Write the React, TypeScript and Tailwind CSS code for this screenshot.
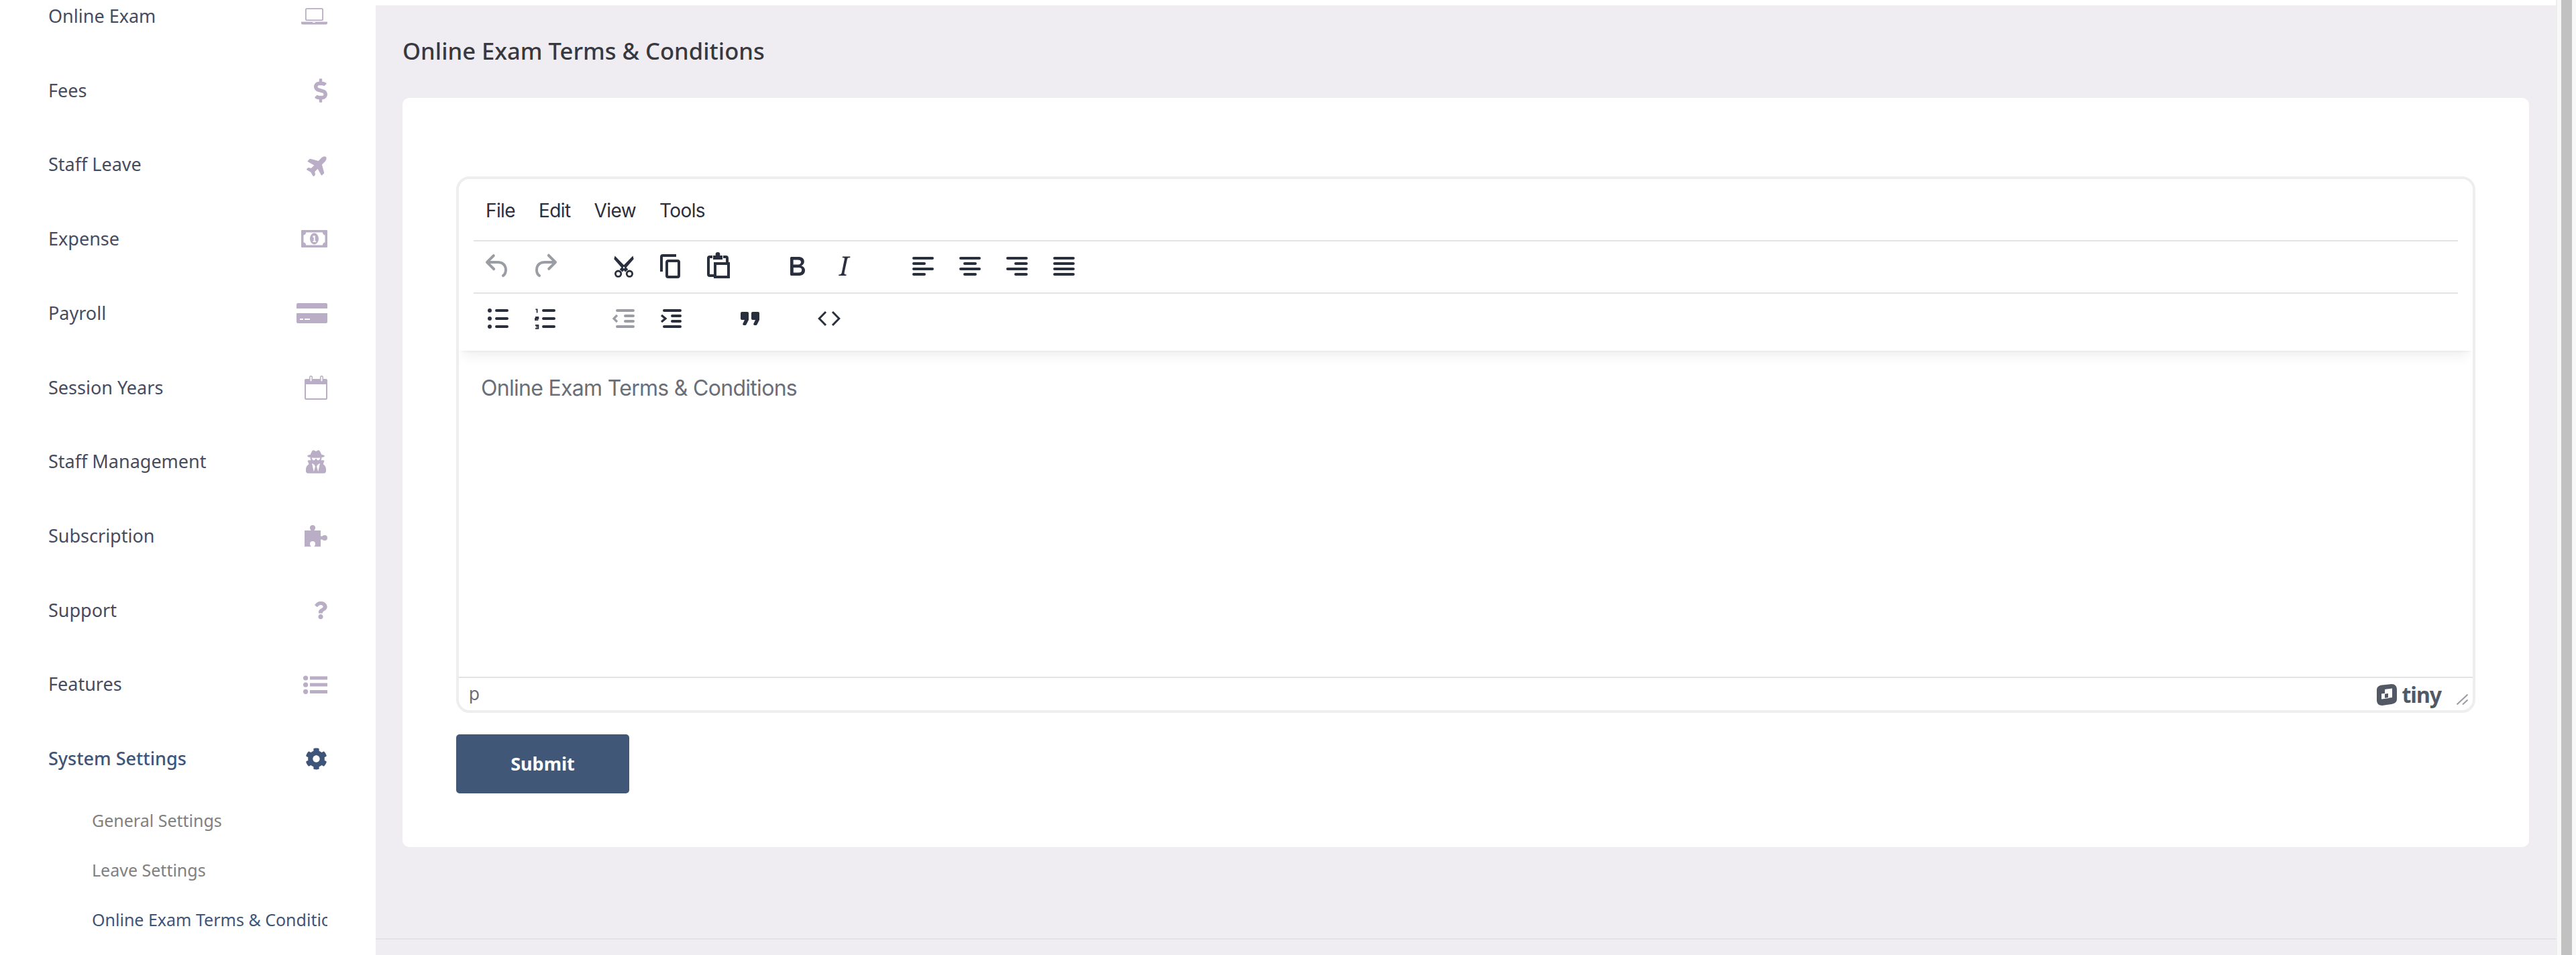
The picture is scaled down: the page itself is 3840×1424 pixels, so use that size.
import React from 'react';
import { FaCog, FaDollarSign, FaPlane, FaQuestion, FaUserSecret } from 'react-icons/fa';

function LaptopIcon() {
  return (
    <svg viewBox="0 0 39 25" className="w-[39px] h-[25px]" fill="currentColor">
      <rect x="6.9" y="0.9" width="25.2" height="17.2" rx="1.6" fill="none" stroke="currentColor" strokeWidth="1.8" />
      <path d="M0 20.5h39v2a2 2 0 01-2 2H2a2 2 0 01-2-2z" />
      <rect x="17" y="21" width="4" height="1" fill="#ffffff" />
    </svg>
  );
}

function MoneyIcon() {
  return (
    <svg viewBox="0 0 39 26" className="w-[39px] h-[26px]" fill="currentColor">
      <rect width="39" height="26" rx="1" />
      <path d="M7 3.5h25c0 2.5 1.5 4 3.5 4v11c-2 0-3.5 1.500-3.500 4H7c0-2.500-1.500-4-3.500-4v-11c2 0 3.500-1.500 3.500-4z" fill="#ffffff" />
      <ellipse cx="19.500" cy="13" rx="6.500" ry="8.500" />
      <path d="M17.500 8.500h3.200v8h1.500v1.500h-5v-1.500h1.500v-5.500h-1.200z" fill="#ffffff" />
    </svg>
  );
}

function CardIcon() {
  return (
    <svg viewBox="0 0 46 30" className="w-[46px] h-[30px]" fill="currentColor">
      <path d="M2 0h42a2 2 0 012 2v6H0V2a2 2 0 012-2z" />
      <path d="M0 15h46v13a2 2 0 01-2 2H2a2 2 0 01-2-2z" />
      <rect x="5" y="23" width="5" height="2" fill="#ffffff" />
      <rect x="12" y="23" width="8" height="2" fill="#ffffff" />
    </svg>
  );
}

function CalendarIcon() {
  return (
    <svg viewBox="0 0 34 36" className="w-[34px] h-[36px]" fill="currentColor">
      <path d="M2 5h30a2 2 0 012 2v27a2 2 0 01-2 2H2a2 2 0 01-2-2V7a2 2 0 012-2zm0 8v21h30V13z" fillRule="evenodd" />
      <rect x="7" y="0" width="5" height="10" rx="2.500" />
      <rect x="23" y="0" width="5" height="10" rx="2.500" />
      <rect x="8.500" y="1.500" width="2" height="7" rx="1" fill="#ffffff" />
      <rect x="24.500" y="1.500" width="2" height="7" rx="1" fill="#ffffff" />
    </svg>
  );
}

function PuzzleIcon() {
  return (
    <svg viewBox="0 0 34 32" className="w-[34px] h-[32px]" fill="currentColor">
      <circle cx="12" cy="4" r="4" />
      <rect x="9.500" y="5" width="5" height="5" />
      <rect x="0" y="8" width="24" height="24" />
      <circle cx="30" cy="19" r="4" />
      <rect x="23" y="16.500" width="5" height="5" />
      <circle cx="12" cy="28" r="4" fill="#ffffff" />
      <rect x="9.500" y="29" width="5" height="3" fill="#ffffff" />
    </svg>
  );
}

function ListIcon() {
  return (
    <svg viewBox="0 0 36 28" className="w-[36px] h-[28px]" fill="currentColor">
      <circle cx="3.600" cy="4" r="3.600" />
      <circle cx="3.600" cy="14" r="3.600" />
      <circle cx="3.600" cy="24.300" r="3.600" />
      <rect x="10" y="1.500" width="26" height="5" />
      <rect x="10" y="11.500" width="26" height="5" />
      <rect x="10" y="22" width="26" height="5" />
    </svg>
  );
}

const menu = [
  { label: 'Online Exam', icon: <LaptopIcon /> },
  { label: 'Fees', icon: <FaDollarSign className="w-[20px] h-[36px]" /> },
  { label: 'Staff Leave', icon: <FaPlane className="w-[34px] h-[34px] -mr-[3px] -rotate-45" /> },
  { label: 'Expense', icon: <MoneyIcon /> },
  { label: 'Payroll', icon: <CardIcon /> },
  { label: 'Session Years', icon: <CalendarIcon /> },
  { label: 'Staff Management', icon: <FaUserSecret className="w-[30px] h-[35px] mr-[2px]" /> },
  { label: 'Subscription', icon: <PuzzleIcon /> },
  { label: 'Support', icon: <FaQuestion className="w-[20px] h-[28px]" /> },
  { label: 'Features', icon: <ListIcon /> },
];

function TinyIcon({ children, muted }: { children: React.ReactNode; muted?: boolean }) {
  return (
    <svg
      viewBox="0 0 24 24"
      className={muted ? 'w-[48px] h-[48px] text-[#9b9da4]' : 'w-[48px] h-[48px] text-[#2a2f3e]'}
      fill="currentColor"
    >
      {children}
    </svg>
  );
}

function Lines({ d }: { d: string }) {
  return <path d={d} fill="none" stroke="currentColor" strokeWidth="2" strokeLinecap="round" />;
}

function Group({ children }: { children: React.ReactNode }) {
  return <div className="flex gap-[22px]">{children}</div>;
}

function App() {
  return (
    <div className="flex w-[3840px] h-[1424px] overflow-hidden bg-white">
      {/* Sidebar */}
      <aside className="w-[560px] shrink-0 px-[72px] -mt-[31px] font-['Noto_Sans',sans-serif]">
        {menu.map((item) => (
          <div key={item.label} className="h-[110.700px] flex items-center justify-between text-[27px] text-[#b9aec5]">
            <span className="text-[#464c60]">{item.label}</span>
            {item.icon}
          </div>
        ))}
        <div className="h-[110.700px] flex items-center justify-between text-[27px] font-medium text-[#3e5479]">
          <span>System Settings</span>
          <FaCog className="w-[33px] h-[33px]" />
        </div>
        <div className="pl-[65px] text-[25px] whitespace-nowrap overflow-hidden">
          <div className="h-[74px] flex items-center text-[#808080]">General Settings</div>
          <div className="h-[74px] flex items-center text-[#808080]">Leave Settings</div>
          <div className="h-[74px] flex items-center text-[#3e5479]">Online Exam Terms &amp; Conditions</div>
        </div>
      </aside>

      {/* Main */}
      <main className="flex-1 pt-[8px]">
        <div className="h-full bg-[#efedf2] flex flex-col">
          <div className="px-[40px]">
            <h1 className="pt-[48px] h-[138px] leading-[40px] text-[34.600px] font-medium text-[#38393f] font-['Noto_Sans',sans-serif]">
              Online Exam Terms &amp; Conditions
            </h1>
            <section className="h-[1117px] bg-white rounded-[10px] px-[80px] pt-[117px]">
              {/* Editor */}
              <div className="h-[800px] border-[4px] border-[#eeeeee] rounded-[20px] flex flex-col font-['Inter',sans-serif] overflow-hidden">
                <div className="relative z-10 h-[256px] shrink-0 px-[22px] bg-white shadow-[0_4px_4px_-4px_rgba(34,47,62,0.1),0_16px_16px_-8px_rgba(34,47,62,0.07)]">
                  <div className="h-[91px] pt-[30px] flex gap-[35px] pl-[18px] text-[28px] tracking-[-0.6px] leading-[34px] text-[#2a2f3e]">
                    <span>File</span>
                    <span>Edit</span>
                    <span>View</span>
                    <span>Tools</span>
                  </div>
                  <div className="h-[78px] border-t-2 border-[#e3e3e3] pt-[13px] pl-[12px] flex gap-[70px]">
                    <Group>
                      <TinyIcon muted>
                        <path d="M6.400 8H12c3.700 0 6.200 2 6.800 5.100.6 2.700-.4 5.600-2.300 6.800a1 1 0 01-1-1.800c1.100-.6 1.800-2.700 1.400-4.600-.5-2.100-2.100-3.500-4.900-3.500H6.400l3.300 3.300a1 1 0 11-1.400 1.400l-5-5a1 1 0 010-1.400l5-5a1 1 0 011.400 1.400L6.400 8z" />
                      </TinyIcon>
                      <TinyIcon muted>
                        <path d="M17.600 10H12c-2.800 0-4.400 1.400-4.900 3.500-.4 2 .3 4 1.400 4.600a1 1 0 11-1 1.800c-2-1.200-2.900-4.100-2.300-6.800.6-3 3-5.100 6.800-5.100h5.600l-3.300-3.300a1 1 0 111.400-1.400l5 5a1 1 0 010 1.400l-5 5a1 1 0 01-1.400-1.400l3.300-3.300z" />
                      </TinyIcon>
                    </Group>
                    <Group>
                      <TinyIcon>
                        <path d="M5.500 5l-.4 1.500 8 9.200 1.500-1.300zM18.500 5l.4 1.500-8 9.200-1.500-1.300z" stroke="currentColor" strokeWidth="0.8" />
                        <circle cx="7.800" cy="17.600" r="2.100" fill="none" stroke="currentColor" strokeWidth="1.400" />
                        <circle cx="16.200" cy="17.600" r="2.100" fill="none" stroke="currentColor" strokeWidth="1.400" />
                      </TinyIcon>
                      <TinyIcon>
                        <path d="M16 3H6a2 2 0 00-2 2v11h2V5h10V3zm1 4a2 2 0 012 2v10a2 2 0 01-2 2h-7a2 2 0 01-2-2V9c0-1.200.9-2 2-2h7zm0 12V9h-7v10h7z" />
                      </TinyIcon>
                      <TinyIcon>
                        <path d="M8 5H6a1 1 0 00-1 1v12a1 1 0 001 1h3M16 5h2a1 1 0 011 1v3M10 10h10v10H10z" fill="none" stroke="currentColor" strokeWidth="2" />
                        <path d="M8.500 4h7v3h-7z" />
                        <circle cx="12" cy="3.200" r="1.700" />
                      </TinyIcon>
                    </Group>
                    <Group>
                      <TinyIcon>
                        <path d="M7.800 19c-.3 0-.5 0-.6-.2l-.2-.5V5.700c0-.2 0-.4.2-.5l.6-.2h5c1.500 0 2.700.3 3.500 1 .7.6 1.100 1.400 1.100 2.500a3 3 0 01-.6 1.900c-.4.6-1 1-1.600 1.200.4.1.9.3 1.300.6s.8.7 1 1.200c.4.4.5 1 .5 1.600 0 1.300-.4 2.300-1.300 3-.8.7-2.100 1-3.800 1H7.800zm5-8.300c.6 0 1.200-.1 1.600-.5.4-.3.6-.7.6-1.300 0-1.100-.8-1.700-2.300-1.700H9.300v3.500h3.500zm.5 6c.7 0 1.300-.1 1.700-.4.4-.4.6-.9.6-1.500s-.2-1-.7-1.400c-.4-.3-1-.4-2-.4H9.400v3.700h3.900z" />
                      </TinyIcon>
                      <TinyIcon>
                        <path d="M16.700 4.700l-.1.9h-.3c-.6 0-1 0-1.400.3-.3.3-.4.6-.5 1.100l-2.100 9.800v.6c0 .5.4.8 1.400.8h.2l-.2.8H8l.2-.8h.2c1.100 0 1.800-.5 2-1.500l2-9.800.1-.5c0-.6-.4-.8-1.400-.8h-.3l.2-.9h5.800z" />
                      </TinyIcon>
                    </Group>
                    <Group>
                      <TinyIcon><Lines d="M5 6h14M5 10h8M5 14h14M5 18h8" /></TinyIcon>
                      <TinyIcon><Lines d="M5 6h14M8 10h8M5 14h14M8 18h8" /></TinyIcon>
                      <TinyIcon><Lines d="M5 6h14M11 10h8M5 14h14M11 18h8" /></TinyIcon>
                      <TinyIcon><Lines d="M5 6h14M5 10h14M5 14h14M5 18h14" /></TinyIcon>
                    </Group>
                  </div>
                  <div className="h-[85px] border-t-2 border-[#e3e3e3] pt-[13px] pl-[12px] flex gap-[70px]">
                    <Group>
                      <TinyIcon>
                        <circle cx="6" cy="6" r="1.500" />
                        <circle cx="6" cy="12" r="1.500" />
                        <circle cx="6" cy="18" r="1.500" />
                        <Lines d="M11 6h8M11 12h8M11 18h8" />
                      </TinyIcon>
                      <TinyIcon>
                        <Lines d="M11 6h8M11 12h8M11 18h8" />
                        <path d="M5.200 5.200h1.100v2.600M5 11h2.200v1H5v1.100h2.200M5 17h2.200v2.400H5M5.400 18.200h1.600" fill="none" stroke="currentColor" strokeWidth="0.9" />
                      </TinyIcon>
                    </Group>
                    <Group>
                      <TinyIcon muted>
                        <Lines d="M7 6h12M13 10h6M13 14h6M7 18h12" />
                        <path d="M7 9.500L4.500 12 7 14.500" fill="none" stroke="currentColor" strokeWidth="1.600" />
                      </TinyIcon>
                      <TinyIcon>
                        <Lines d="M7 6h12M13 10h6M13 14h6M7 18h12" />
                        <path d="M5 9.500L8 12l-3 2.500" fill="none" stroke="currentColor" strokeWidth="1.600" />
                      </TinyIcon>
                    </Group>
                    <Group>
                      <TinyIcon>
                        <path d="M7.500 17h.9c.4 0 .7-.2.9-.6L11 13V8c0-.6-.4-1-1-1H6a1 1 0 00-1 1v4c0 .6.4 1 1 1h2l-1.300 2.700a1 1 0 00.8 1.300zm8 0h.9c.4 0 .7-.2.9-.6L19 13V8c0-.6-.4-1-1-1h-4a1 1 0 00-1 1v4c0 .6.4 1 1 1h2l-1.300 2.700a1 1 0 00.8 1.300z" />
                      </TinyIcon>
                    </Group>
                    <Group>
                      <TinyIcon>
                        <path d="M9.500 7L4.600 12l4.900 5M14.500 7l4.900 5-4.900 5" fill="none" stroke="currentColor" strokeWidth="1.500" />
                      </TinyIcon>
                    </Group>
                  </div>
                </div>
                <div className="flex-1 pl-[33px] pt-[36px] text-[32px] tracking-[-0.7px] leading-[40px] text-[#6a6e78]">
                  Online Exam Terms &amp; Conditions
                </div>
                <div className="h-[50px] shrink-0 border-t-2 border-[#e3e3e3] flex items-center pl-[15px] pr-[7px]">
                  <span className="text-[26px] leading-none text-[#6a6d76]">p</span>
                  <div className="ml-auto mt-[2px] flex items-center gap-[6px] text-[#535865]">
                    <svg viewBox="0 0 32 32" className="w-[32px] h-[32px]" fill="currentColor">
                      <path d="M9 1.500L23 0c5 0 8 3 8 8v14c0 5-3 7-8 8L9 32c-5 0-8-3-8-8V9c0-4.500 3-7 8-7.500z" />
                      <path d="M13 8l11-1.500V20l-6 .8V14l-5 .7zM8 14.500l5-.7v7l6-.8v1l-11 1.500z" fill="#ffffff" />
                    </svg>
                    <span className="text-[32px] leading-none font-bold -tracking-[1px] font-['Noto_Sans',sans-serif]">tiny</span>
                    <svg viewBox="0 0 17 16" className="w-[17px] h-[16px] ml-[17px] mt-[14px] text-[#9b9da4]" fill="none" stroke="currentColor" strokeWidth="2">
                      <path d="M0.500 15.500L16.500 0.500M9 15.500l7.500-7" />
                    </svg>
                  </div>
                </div>
              </div>
              <button className="mt-[32px] w-[258px] h-[88px] rounded-[5px] bg-[#415778] text-white text-[27px] font-bold font-['Noto_Sans',sans-serif]">
                Submit
              </button>
            </section>
          </div>
          <div className="mt-[136px] border-t-2 border-[#e3e0ea]" />
        </div>
      </main>

      {/* Scrollbar */}
      <div className="w-[30px] shrink-0 bg-[#f8f8f8] border-l-2 border-[#eeeeee] pl-[6px] pr-[6px]">
        <div className="h-full w-[16px] bg-[#c1c1c1]" />
      </div>
    </div>
  );
}

export default App;
